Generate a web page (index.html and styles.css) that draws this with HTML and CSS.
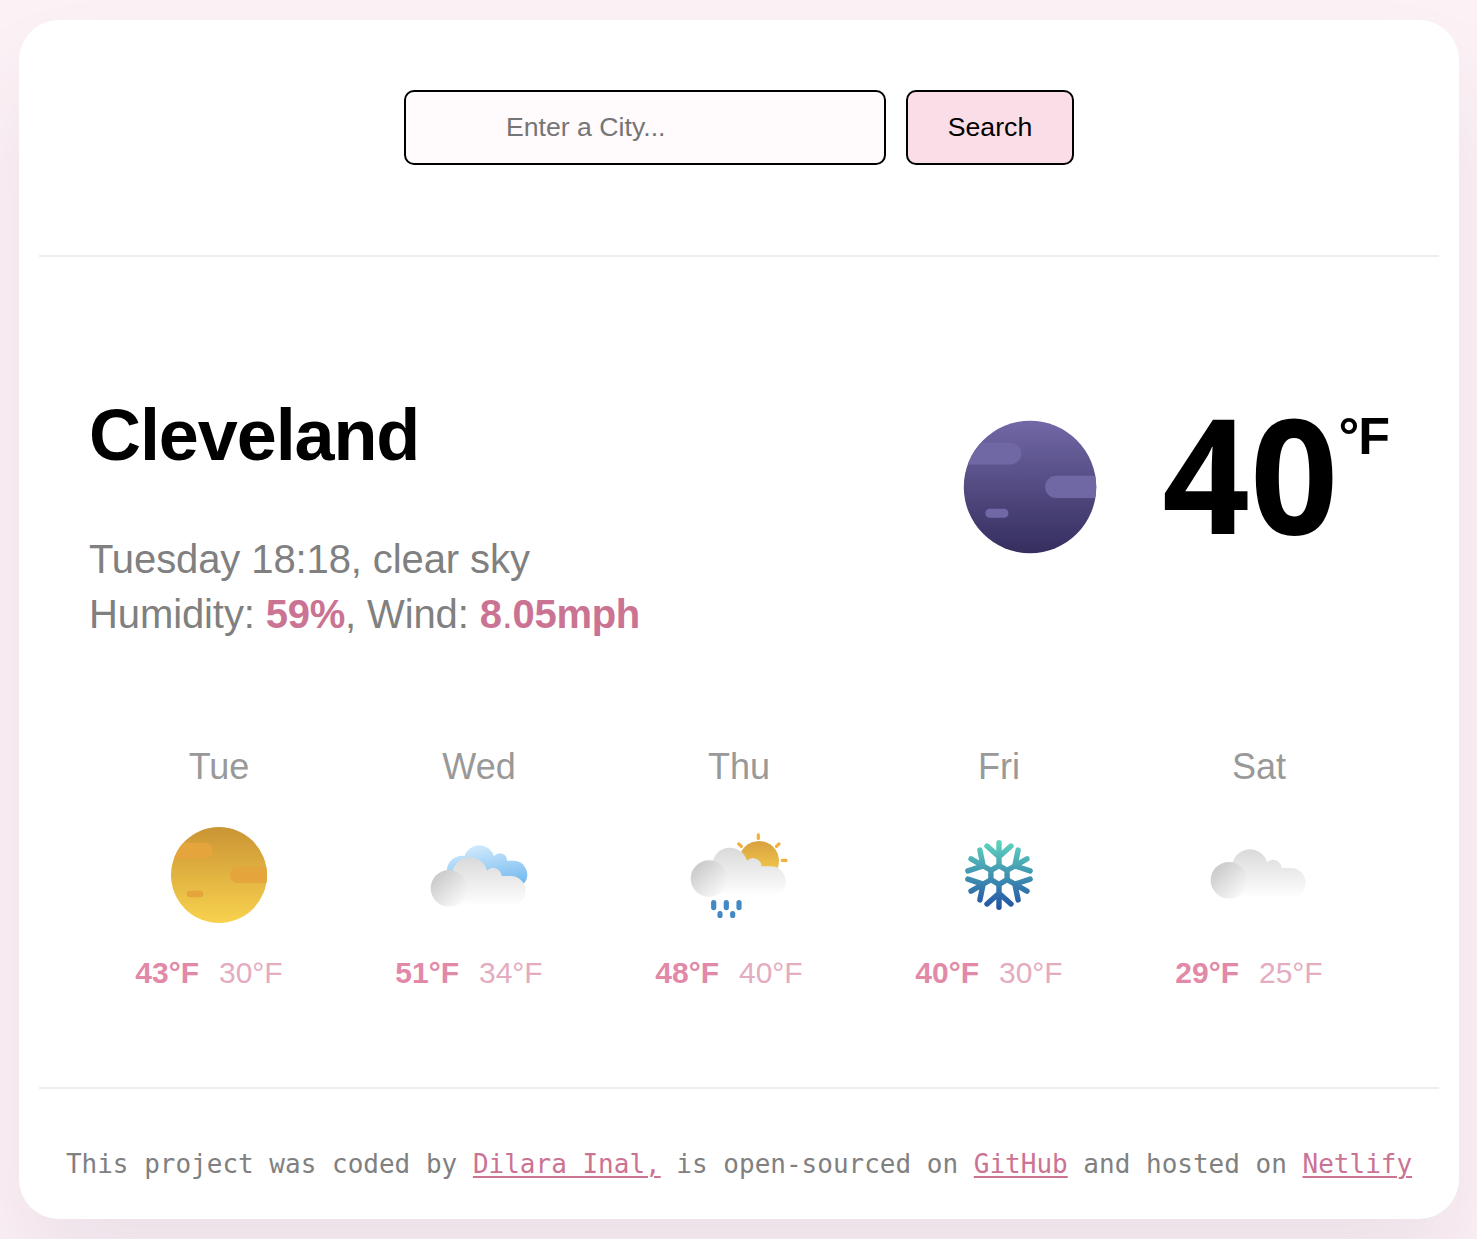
FILE: index.html
```html
<!DOCTYPE html>
<html lang="en">
<head>
<meta charset="utf-8">
<title>Weather App</title>
<link rel="stylesheet" href="styles.css">
</head>
<body>
<svg class="defs" width="0" height="0" aria-hidden="true">
  <defs>
    <linearGradient id="night" x1="0" y1="0" x2="0" y2="1"><stop offset="0" stop-color="#7168a6"/><stop offset="1" stop-color="#352e5e"/></linearGradient>
    <linearGradient id="day" x1="0" y1="0" x2="0" y2="1"><stop offset="0" stop-color="#ca9434"/><stop offset="1" stop-color="#f8d24e"/></linearGradient>
    <linearGradient id="sun" x1="0" y1="0" x2="0" y2="0.8"><stop offset="0" stop-color="#d8a13f"/><stop offset="1" stop-color="#f3c94c"/></linearGradient>
    <linearGradient id="cloud" gradientUnits="userSpaceOnUse" x1="50" y1="32" x2="50" y2="81"><stop offset="0" stop-color="#d9d9d9"/><stop offset="1" stop-color="#ffffff"/></linearGradient>
    <linearGradient id="puff" x1="0.1" y1="0.15" x2="0.8" y2="0.9"><stop offset="0" stop-color="#c9c9c9"/><stop offset="1" stop-color="#f7f7f7"/></linearGradient>
    <linearGradient id="sky" gradientUnits="userSpaceOnUse" x1="50" y1="19" x2="58" y2="63"><stop offset="0" stop-color="#d2eafc"/><stop offset="1" stop-color="#76bbef"/></linearGradient>
    <linearGradient id="ice" gradientUnits="userSpaceOnUse" x1="50" y1="15" x2="50" y2="84"><stop offset="0" stop-color="#5fd6bd"/><stop offset="1" stop-color="#2352a5"/></linearGradient>
    <clipPath id="disc"><circle cx="50" cy="50" r="48"/></clipPath>
    <g id="bands" clip-path="url(#disc)">
      <rect x="-10" y="17.7" width="53.7" height="16" rx="8"/>
      <rect x="61" y="41.8" width="50" height="16.2" rx="8"/>
      <rect x="17.7" y="65.8" width="16.6" height="6.5" rx="3"/>
    </g>
    <g id="gray-cloud">
      <path fill="url(#cloud)" d="M20 81V50h3.2a17.7 17.7 0 0 1 34.8-4.5 8.4 8.4 0 0 1 14.5 5.5H81.700a15 15 0 0 1 0 30z"/>
      <circle fill="url(#puff)" cx="20" cy="63.300" r="18.300"/>
    </g>
    <g id="ice-arm">
      <path d="M50 40.500V17.700M38 21L50 31.700L62 21"/>
    </g>
  </defs>
</svg>
<main class="weather-app">
  <header>
    <form class="search-form">
      <input class="search-input" type="search" placeholder="Enter a City...">
      <button class="search-button" type="button">Search</button>
    </form>
  </header>
  <section class="current">
    <div>
      <h1 class="city">Cleveland</h1>
      <p class="details">Tuesday 18:18, clear sky<br>Humidity: <strong>59%</strong>, Wind: <strong>8<span class="point">.</span>05mph</strong></p>
    </div>
    <div class="temperature">
      <svg class="current-icon" viewBox="0 0 100 100"><circle cx="50" cy="50" r="48" fill="url(#night)"/><use href="#bands" fill="#7068a5"/></svg>
      <span class="value">40</span><span class="unit">°F</span>
    </div>
  </section>
  <section class="forecast">
    <div class="day">
      <div class="name">Tue</div>
      <svg class="icon" viewBox="0 0 100 100"><circle cx="50" cy="50" r="48" fill="url(#day)"/><use href="#bands" fill="#e4a53d"/></svg>
      <div class="range"><strong>43°F</strong><span>30°F</span></div>
    </div>
    <div class="day">
      <div class="name">Wed</div>
      <svg class="icon" viewBox="0 0 100 100"><path fill="url(#sky)" d="M18 48a15 15 0 0 1 17.500-17A15.500 15.500 0 0 1 65 31a7.300 7.300 0 0 1 13 4.800h6.500a13.700 13.700 0 0 1 10 23L80 63H30z"/><use href="#gray-cloud"/></svg>
      <div class="range"><strong>51°F</strong><span>34°F</span></div>
    </div>
    <div class="day">
      <div class="name">Thu</div>
      <svg class="icon" viewBox="0 0 100 100">
        <circle cx="70" cy="36" r="20" fill="url(#sun)"/>
        <path d="M69.300 9.800V13.500M93.300 35.400H97M90 18.900L87.500 21.300M49.800 18.900L52.300 21.300" stroke="#f3ae3d" stroke-width="3.200" stroke-linecap="round"/>
        <use href="#gray-cloud" y="-9.700"/>
        <path d="M24.700 77.600v5M37.300 77.600v5M50 77.600v5M31 88.700v1.800M43.700 88.700v1.800" stroke="#4489c4" stroke-width="5.200" stroke-linecap="round"/>
      </svg>
      <div class="range"><strong>48°F</strong><span>40°F</span></div>
    </div>
    <div class="day">
      <div class="name">Fri</div>
      <svg class="icon" viewBox="0 0 100 100">
        <mask id="flake" maskUnits="userSpaceOnUse" x="0" y="0" width="100" height="100">
          <g fill="none" stroke="#fff" stroke-width="5.400" stroke-linecap="round" stroke-linejoin="round">
            <path d="M50 40.700L58.100 45.350V54.650L50 59.300L41.900 54.650V45.350Z"/>
            <use href="#ice-arm"/><use href="#ice-arm" transform="rotate(60 50 50)"/><use href="#ice-arm" transform="rotate(120 50 50)"/><use href="#ice-arm" transform="rotate(180 50 50)"/><use href="#ice-arm" transform="rotate(240 50 50)"/><use href="#ice-arm" transform="rotate(300 50 50)"/>
          </g>
        </mask>
        <rect width="100" height="100" fill="url(#ice)" mask="url(#flake)"/>
      </svg>
      <div class="range"><strong>40°F</strong><span>30°F</span></div>
    </div>
    <div class="day">
      <div class="name">Sat</div>
      <svg class="icon" viewBox="0 0 100 100"><use href="#gray-cloud" y="-8"/></svg>
      <div class="range"><strong>29°F</strong><span>25°F</span></div>
    </div>
  </section>
  <footer>This project was coded by <a href="#">Dilara Inal,</a> is open-sourced on <a href="#">GitHub</a> and hosted on <a href="#">Netlify</a></footer>
</main>
</body>
</html>
```
FILE: styles.css
```css
* { box-sizing: border-box; }
body {
  margin: 0;
  height: 1239px;
  padding: 20px 18px 20px 19px;
  overflow: hidden;
  background: #fcf1f5;
  font-family: "Liberation Sans", Arial, sans-serif;
}
.defs { position: absolute; }
.weather-app {
  width: 1440px;
  height: 1199px;
  padding: 0 20px;
  border-radius: 40px;
  background: #fff;
  box-shadow: 0 60px 100px rgba(65, 50, 100, 0.08);
}
header {
  height: 237px;
  padding-top: 70px;
  border-bottom: 2px solid #eee;
}
.search-form { display: flex; justify-content: center; gap: 20px; }
.search-input, .search-button {
  height: 75px;
  border: 2px solid #000;
  border-radius: 10px;
  font: 26.67px "Liberation Sans", Arial, sans-serif;
}
.search-input {
  width: 482px;
  padding: 0 0 0 100px;
  background: #fffafc;
  appearance: none;
  outline: none;
}
.search-input::placeholder { color: #757575; }
.search-button { width: 168px; padding: 0; background: #fadde6; color: #000; }
.current {
  display: flex;
  justify-content: space-between;
  height: 475px;
  padding: 138px 50px 0;
}
.city { margin: 0; font-size: 72px; line-height: 80px; letter-spacing: -1.1px; }
.details { margin: 57px 0 0; color: #808080; font-size: 40px; line-height: 55px; letter-spacing: -0.1px; }
.details strong { color: #cb7393; letter-spacing: -0.3px; }
.point { font-weight: 400; }
.temperature { display: flex; align-items: flex-start; }
.current-icon { width: 138px; height: 138px; margin: 23px 0 0; }
.value {
  width: 183px;
  margin: -3px 0 0 56px;
  font: bold 160px/160px "Noto Sans", sans-serif;
  transform: scaleX(0.96);
  transform-origin: right;
}
.unit { margin-top: 12px; font-size: 52px; font-weight: bold; line-height: 58px; letter-spacing: -1px; }
.forecast { display: flex; height: 357px; padding: 13px 50px 0; border-bottom: 2px solid #eee; }
.day { width: 260px; text-align: center; }
.name { color: #999; font-size: 36px; line-height: 44px; }
.icon { display: block; width: 100px; height: 100px; margin: 36px auto 31px; }
.range { display: flex; justify-content: center; gap: 20px; padding-right: 20px; font-size: 30px; line-height: 34px; color: #e3acbf; }
.range strong { color: #e289a8; }
footer {
  padding-top: 60px;
  color: #808080;
  font: 26px/31px "DejaVu Sans Mono", monospace;
  text-align: center;
  white-space: nowrap;
}
footer a { color: #cb7393; text-decoration-thickness: 2px; text-underline-offset: 3px; }
```
